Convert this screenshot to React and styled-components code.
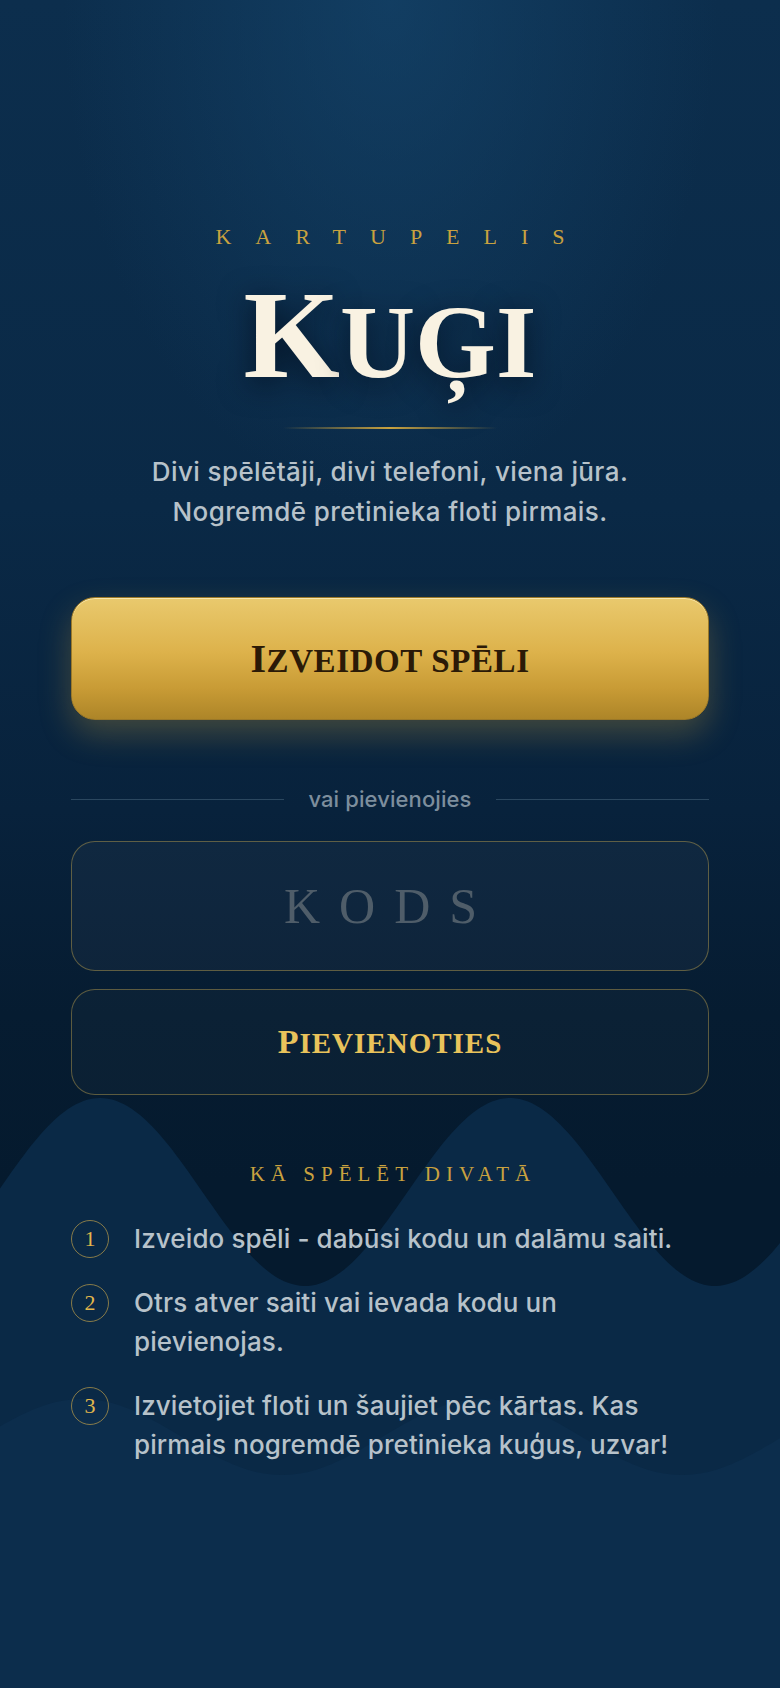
import React from "react";
import styled, { createGlobalStyle } from "styled-components";

const SERIF = `"Liberation Serif", "DejaVu Serif", serif`;
const SANS = `Inter, "Noto Sans", sans-serif`;

const GlobalStyle = createGlobalStyle`
  html, body {
    margin: 0;
    padding: 0;
  }
  body {
    background: #051a2e;
    font-family: ${SANS};
  }
  * {
    box-sizing: border-box;
  }
`;

const steps = [
  "Izveido spēli - dabūsi kodu un dalāmu saiti.",
  "Otrs atver saiti vai ievada kodu un pievienojas.",
  "Izvietojiet floti un šaujiet pēc kārtas. Kas pirmais nogremdē pretinieka kuģus, uzvar!",
];

// sine wave outline, filled down to the bottom of the page
const wavePath = (mid, amp, period, peakX, width, bottom) => {
  let d = "";
  for (let x = 0; x <= width; x += 4) {
    const y = mid - amp * Math.cos((2 * Math.PI * (x - peakX)) / period);
    d += `${x === 0 ? "M" : "L"}${x} ${y.toFixed(1)} `;
  }
  d += `L${width} ${bottom} L0 ${bottom} Z`;
  return d;
};

const App = () => {
  return (
    <React.Fragment>
      <GlobalStyle />
      <Page>
        <Waves viewBox="0 0 780 1688" preserveAspectRatio="none" aria-hidden="true">
          <path d={wavePath(1192, 94, 410, 100, 780, 1688)} fill="#0a2946" />
          <path d={wavePath(1437, 38, 400, 82, 780, 1688)} fill="#0c2d4c" />
        </Waves>

        <Main>
          <Brand>Kartupelis</Brand>
          <Title>Kuģi</Title>
          <GoldRule />
          <Lead>
            Divi spēlētāji, divi telefoni, viena jūra.
            <br />
            Nogremdē pretinieka floti pirmais.
          </Lead>

          <CreateBtn type="button">Izveidot spēli</CreateBtn>

          <Divider>
            <span>vai pievienojies</span>
          </Divider>

          <CodeInput placeholder="Kods" />
          <JoinBtn type="button">Pievienoties</JoinBtn>

          <HowTitle>Kā spēlēt divatā</HowTitle>
          <StepList>
            {steps.map((text, i) => (
              <Step key={i}>
                <StepNum>{i + 1}</StepNum>
                <StepText>{text}</StepText>
              </Step>
            ))}
          </StepList>
        </Main>
      </Page>
    </React.Fragment>
  );
};

export default App;

const Page = styled.div`
  position: relative;
  min-height: 100vh;
  overflow: hidden;

  background: radial-gradient(ellipse 42% 30% at 50% 0%, rgba(22, 72, 112, 0.6), transparent 100%),
    linear-gradient(to bottom, #0c2e4d 0%, #0a2946 30%, #08223c 48%, #061c31 60%, #051a2e 70%, #051a2e 100%);
`;

const Waves = styled.svg`
  position: absolute;
  left: 0;
  top: 0;
  width: 100%;
  height: 1688px;
  pointer-events: none;
`;

const Main = styled.main`
  position: relative;
  z-index: 1;

  display: flex;
  flex-direction: column;

  padding: 224px 71px 0;
`;

const Brand = styled.div`
  font-family: ${SERIF};
  font-size: 22px;
  line-height: 26px;
  text-transform: uppercase;
  letter-spacing: 24px;
  padding-left: 24px;
  text-align: center;
  color: #c9a23f;
`;

const Title = styled.h1`
  margin: 24px 0 0;

  font-family: ${SERIF};
  font-weight: 700;
  font-size: 104px;
  line-height: 124px;
  text-transform: uppercase;
  text-align: center;
  color: #f9f2e2;
  text-shadow: 0 6px 30px rgba(0, 8, 20, 0.7);

  &::first-letter {
    font-size: 124px;
  }
`;

const GoldRule = styled.div`
  width: 214px;
  height: 2px;
  margin: 23px auto 0;
  background: linear-gradient(to right, transparent, #c9a23f 50%, transparent);
`;

const Lead = styled.p`
  margin: 23px 0 0;

  font-size: 26px;
  font-weight: 500;
  line-height: 40px;
  letter-spacing: 0.4px;
  text-align: center;
  color: #b7c2ca;
`;

const CreateBtn = styled.button`
  margin-top: 65px;
  height: 123px;
  width: 100%;

  border: 1px solid #9a7828;
  border-radius: 24px;
  background: linear-gradient(to bottom, #e9c96d 0%, #ddb24b 45%, #c89b35 75%, #ad8528 100%);
  box-shadow: inset 0 1px 0 rgba(255, 242, 196, 0.7), 0 14px 32px rgba(214, 168, 58, 0.28);

  font-family: ${SERIF};
  font-weight: 700;
  font-size: 33px;
  letter-spacing: 0.6px;
  text-transform: uppercase;
  color: #2b1a07;
  cursor: pointer;

  &::first-letter {
    font-size: 40px;
  }
`;

const Divider = styled.div`
  margin-top: 67px;
  height: 24px;

  display: flex;
  align-items: center;
  gap: 24px;

  &::before,
  &::after {
    content: "";
    flex: 1;
    height: 1px;
    background: rgba(118, 148, 172, 0.32);
  }

  > span {
    font-size: 22px;
    font-weight: 500;
    line-height: 24px;
    letter-spacing: 0.1px;
    color: #7d8e9d;
  }
`;

const CodeInput = styled.input`
  margin-top: 30px;
  height: 130px;
  width: 100%;

  border: 1.5px solid rgba(160, 140, 72, 0.55);
  border-radius: 24px;
  background: rgba(255, 255, 255, 0.035);
  outline: none;

  font-family: ${SERIF};
  font-size: 50px;
  letter-spacing: 19px;
  text-align: center;
  text-transform: uppercase;
  color: #e8dfc8;

  &::placeholder {
    color: #4f5d69;
    text-transform: uppercase;
  }
`;

const JoinBtn = styled.button`
  margin-top: 18px;
  height: 106px;
  width: 100%;

  border: 1.5px solid rgba(160, 140, 72, 0.55);
  border-radius: 24px;
  background: rgba(255, 255, 255, 0.025);

  font-family: ${SERIF};
  font-weight: 700;
  font-size: 29px;
  letter-spacing: 1px;
  text-transform: uppercase;
  color: #e9c35b;
  cursor: pointer;

  &::first-letter {
    font-size: 34px;
  }
`;

const HowTitle = styled.h2`
  margin: 66px 0 0;

  font-family: ${SERIF};
  font-weight: 400;
  font-size: 21px;
  line-height: 26px;
  letter-spacing: 6px;
  padding-left: 6px;
  text-transform: uppercase;
  text-align: center;
  color: #c9a23f;
`;

const StepList = styled.ol`
  list-style: none;
  margin: 32px 0 0;
  padding: 0;

  display: flex;
  flex-direction: column;
  gap: 25px;
`;

const Step = styled.li`
  display: flex;
  align-items: flex-start;
  gap: 25px;
`;

const StepNum = styled.span`
  flex: none;
  width: 38px;
  height: 38px;
  margin-top: 1px;

  display: flex;
  align-items: center;
  justify-content: center;

  border: 1.5px solid rgba(176, 150, 74, 0.75);
  border-radius: 50%;

  font-family: ${SERIF};
  font-size: 22px;
  color: #e2b74c;
`;

const StepText = styled.span`
  max-width: 556px;

  font-size: 26px;
  font-weight: 500;
  line-height: 39px;
  letter-spacing: 0.1px;
  color: #b7c2ca;
`;
